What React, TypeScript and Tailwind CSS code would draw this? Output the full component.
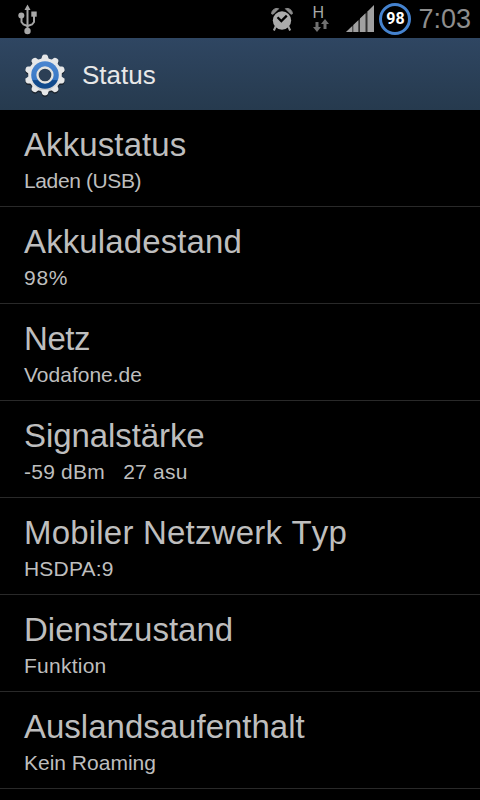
const items = [
  { title: "Akkustatus", value: "Laden (USB)", titleClass: "tracking-[0.1px]", valueClass: "tracking-[-0.38px]" },
  { title: "Akkuladestand", value: "98%", titleClass: "tracking-[0.12px]", valueClass: "tracking-[0.7px]" },
  { title: "Netz", value: "Vodafone.de", titleClass: "tracking-[-0.45px]", valueClass: "" },
  { title: "Signalstärke", value: "-59 dBm   27 asu", titleClass: "tracking-[-0.08px]", valueClass: "tracking-[0.23px]" },
  { title: "Mobiler Netzwerk Typ", value: "HSDPA:9", titleClass: "tracking-[0.2px]", valueClass: "tracking-[0.2px]" },
  { title: "Dienstzustand", value: "Funktion", titleClass: "", valueClass: "tracking-[0.25px]" },
  { title: "Auslandsaufenthalt", value: "Kein Roaming", titleClass: "", valueClass: "" },
];

function UsbIcon() {
  return (
    <svg width="20" height="32" viewBox="0 0 20 32" fill="none" className="block">
      <g stroke="#a4a4a4" strokeWidth="2">
        <path d="M9.500 6v20" />
        <path d="M3.500 13v5l2 2.500 4 1.500" />
        <path d="M16 11v7l-2 2.500-4.500 1.500" />
      </g>
      <g fill="#a8a8a8">
        <path d="M9.500 0.500l3 5.500h-6z" />
        <circle cx="3.300" cy="11.500" r="3" />
        <rect x="13.300" y="7.500" width="5.400" height="5.200" />
        <circle cx="9.500" cy="27" r="3.200" />
      </g>
    </svg>
  );
}

function AlarmIcon() {
  return (
    <svg width="22" height="25" viewBox="0 0 23 26" fill="none" className="block">
      <path d="M5 20l-2 4.500M18 20l2 4.500" stroke="#a3a3a3" strokeWidth="2.200" />
      <circle cx="11.500" cy="14" r="9.600" fill="#ababab" />
      <path d="M0.600 7C0.600 3.500 4 0.500 8 1.700L2.200 7.500z" fill="#8c8c8c" stroke="#8c8c8c" />
      <path d="M22.400 7C22.400 3.500 19 0.500 15 1.700L20.800 7.500z" fill="#8c8c8c" stroke="#8c8c8c" />
      <path d="M6.800 10.700l4 4 5.700-5.700" stroke="#000" strokeWidth="2.400" />
    </svg>
  );
}

function DataArrows() {
  return (
    <svg width="18" height="14" viewBox="0 0 18 14" className="block">
      <path d="M3.500 3h3v5H9l-4 5-4-5h2.500z" fill="#707070" />
      <path d="M11.500 10h3V5H17l-4-5-4 5h2.500z" fill="#707070" />
    </svg>
  );
}

function SignalIcon() {
  return (
    <svg width="29" height="28" viewBox="0 0 29 28" className="block">
      <path d="M0 27L28 0.500V27z" fill="#303030" />
      <g fill="#a0a0a0">
        <path d="M0 27l6.300-6V27z" />
        <path d="M7.300 20l5-4.800V27h-5z" />
        <path d="M14 13.500l5.500-5.200V27H14z" />
        <path d="M21.500 6.500L28 0v27h-6.500z" />
      </g>
    </svg>
  );
}

const teeth = [0, 36, 72, 108, 144, 180, 216, 252, 288, 324];

function GearShape() {
  return (
    <>
      <circle cx="21" cy="21" r="16.800" />
      {teeth.map((a) => (
        <path
          key={a}
          d="M17 6L18.200 2Q18.700 0.600 21 0.600T23.800 2L25 6z"
          transform={`rotate(${a} 21 21)`}
        />
      ))}
    </>
  );
}

function SettingsIcon() {
  return (
    <svg width="42" height="44" viewBox="0 0 42 44" className="block">
      <defs>
        <linearGradient id="rim" x1="0" y1="0" x2="0" y2="42" gradientUnits="userSpaceOnUse">
          <stop offset="0.600" stopColor="#e6e7e8" />
          <stop offset="0.850" stopColor="#c9cbcd" />
          <stop offset="1" stopColor="#999da0" />
        </linearGradient>
        <linearGradient id="ring" x1="0" y1="7" x2="0" y2="35" gradientUnits="userSpaceOnUse">
          <stop offset="0" stopColor="#4b86d0" />
          <stop offset="0.660" stopColor="#3a79c6" />
          <stop offset="0.700" stopColor="#114a8c" />
          <stop offset="1" stopColor="#114a8c" />
        </linearGradient>
      </defs>
      <g fill="#1b232c" transform="translate(0 1.500)">
        <GearShape />
      </g>
      <g fill="url(#rim)">
        <GearShape />
      </g>
      <circle cx="21" cy="21" r="13.800" fill="url(#ring)" />
      <circle cx="21" cy="21" r="7.500" fill="#2c3f55" stroke="#e6e4df" strokeWidth="2.300" />
    </svg>
  );
}

function StatusBar() {
  return (
    <div className="flex h-[38px] items-start bg-black">
      <div className="pt-1 pl-[18px]">
        <UsbIcon />
      </div>
      <div className="ml-auto flex items-start">
        <div className="mr-[19px] pt-[7px]">
          <AlarmIcon />
        </div>
        <div className="mr-4 pt-[5px]">
          <div className="h-[14px] text-[16px] leading-4 text-[#a8a8a8]">H</div>
          <DataArrows />
        </div>
        <div className="mr-1 pt-[5px]">
          <SignalIcon />
        </div>
        <div className="mt-[3px] mr-[7px] flex size-8 items-center justify-center rounded-full border-[3px] border-[#4583cf] font-[Roboto,sans-serif] text-[16px] leading-none font-bold text-white">
          98
        </div>
        <div className="pt-1 pr-[9px] text-[27px] leading-[30px] text-[#8e8e8e]">7:03</div>
      </div>
    </div>
  );
}

export default function App() {
  return (
    <main className="h-[800px] w-[480px] overflow-hidden bg-black font-['Liberation_Sans',Arial,sans-serif]">
      <StatusBar />
      <header className="flex h-[72px] items-center bg-linear-to-b from-[#2f4662] to-[#263a4e] pl-6">
        <div className="pt-[3px]">
          <SettingsIcon />
        </div>
        <h1 className="ml-4 pt-0.5 text-[26px] leading-[30px] text-[#e8e8e8]">Status</h1>
      </header>
      <ul>
        {items.map((item) => (
          <li key={item.title} className="h-[97px] border-b border-[#292929] pt-4 pl-6 text-[#bebebe]">
            <div className={`text-[33px] leading-[38px] [font-kerning:none] ${item.titleClass}`}>{item.title}</div>
            <div className={`mt-[5px] text-[21px] leading-6 whitespace-pre ${item.valueClass}`}>{item.value}</div>
          </li>
        ))}
      </ul>
    </main>
  );
}
